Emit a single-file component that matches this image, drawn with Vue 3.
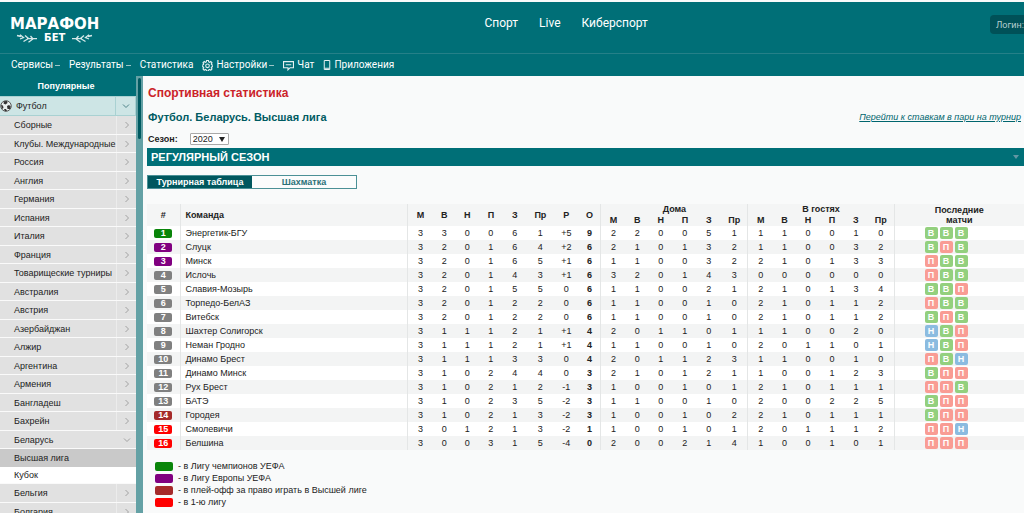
<script setup>
import { ref } from 'vue'

const sections = ['Спорт', 'Live', 'Киберспорт']
const before = ['Сборные', 'Клубы. Международные', 'Россия', 'Англия', 'Германия', 'Испания', 'Италия', 'Франция', 'Товарищеские турниры', 'Австралия', 'Австрия', 'Азербайджан', 'Алжир', 'Аргентина', 'Армения', 'Бангладеш', 'Бахрейн', 'Беларусь']
const after = ['Бельгия', 'Болгария']
const menu = [
  ...before.map((name) => ({ name, kind: name === 'Беларусь' ? 'open' : 'closed' })),
  { name: 'Высшая лига', kind: 'current' },
  { name: 'Кубок', kind: 'leaf' },
  ...after.map((name) => ({ name, kind: 'closed' })),
]
const season = ref('2020')

const source = [
  ['Энергетик-БГУ', '3 3 0 0 6 1 +5 9 2 2 0 0 5 1 1 1 0 0 1 0', 'ВВВ', 'green'],
  ['Слуцк', '3 2 0 1 6 4 +2 6 2 1 0 1 3 2 1 1 0 0 3 2', 'ВПВ', 'purple'],
  ['Минск', '3 2 0 1 6 5 +1 6 1 1 0 0 3 2 2 1 0 1 3 3', 'ПВВ', 'purple'],
  ['Ислочь', '3 2 0 1 4 3 +1 6 3 2 0 1 4 3 0 0 0 0 0 0', 'ПВВ', 'gray'],
  ['Славия-Мозырь', '3 2 0 1 5 5 0 6 1 1 0 0 2 1 2 1 0 1 3 4', 'ВВП', 'gray'],
  ['Торпедо-БелАЗ', '3 2 0 1 2 2 0 6 1 1 0 0 1 0 2 1 0 1 1 2', 'ПВВ', 'gray'],
  ['Витебск', '3 2 0 1 2 2 0 6 1 1 0 0 1 0 2 1 0 1 1 2', 'ВПВ', 'gray'],
  ['Шахтер Солигорск', '3 1 1 1 2 1 +1 4 2 0 1 1 0 1 1 1 0 0 2 0', 'НВП', 'gray'],
  ['Неман Гродно', '3 1 1 1 2 1 +1 4 1 1 0 0 1 0 2 0 1 1 0 1', 'НВП', 'gray'],
  ['Динамо Брест', '3 1 1 1 3 3 0 4 2 0 1 1 2 3 1 1 0 0 1 0', 'ПВН', 'gray'],
  ['Динамо Минск', '3 1 0 2 4 4 0 3 2 1 0 1 2 1 1 0 0 1 2 3', 'ВПП', 'gray'],
  ['Рух Брест', '3 1 0 2 1 2 -1 3 1 0 0 1 0 1 2 1 0 1 1 1', 'ППВ', 'gray'],
  ['БАТЭ', '3 1 0 2 3 5 -2 3 1 1 0 0 1 0 2 0 0 2 2 5', 'ВПП', 'gray'],
  ['Городея', '3 1 0 2 1 3 -2 3 1 0 0 1 0 2 2 1 0 1 1 1', 'ВПП', 'brown'],
  ['Смолевичи', '3 0 1 2 1 3 -2 1 1 0 0 1 0 1 2 0 1 1 1 2', 'ППН', 'red'],
  ['Белшина', '3 0 0 3 1 5 -4 0 2 0 0 2 1 4 1 0 0 1 0 1', 'ППП', 'red'],
]
const rows = source.map(([team, stats, form, zone]) => ({ team, stats: stats.split(' '), form: form.split(''), zone }))
const formClass = { В: 'win', П: 'loss', Н: 'draw' }
const total = ['М', 'В', 'Н', 'П', 'З', 'Пр', 'Р', 'О']
const half = ['М', 'В', 'Н', 'П', 'З', 'Пр']
const legend = [
  ['green', 'в Лигу чемпионов УЕФА'],
  ['purple', 'в Лигу Европы УЕФА'],
  ['brown', 'в плей-офф за право играть в Высшей лиге'],
  ['red', 'в 1-ю лигу'],
]
const branch = 'M1 1.500 5 2.500M4 .8 7.500 3.500 4 5M9 1.500 12.500 4.500 7.500 7.500M14.500 2 17 5 12.500 8.300M11 4.600H21'
const edge = (i) => i === 0 || i === 8 || i === 14
</script>

<template>
  <div class="page">
    <header class="top">
      <div class="brand-row">
        <a class="logo" href="#">
          <span class="logo-main">МАРАФОН</span>
          <span class="logo-sub">
            <svg class="laurel" viewBox="0 0 22 9"><path :d="branch" /></svg>
            <span>БЕТ</span>
            <svg class="laurel" viewBox="0 0 22 9"><path :d="branch" transform="matrix(-1 0 0 1 22 0)" /></svg>
          </span>
        </a>
        <nav class="sections"><a v-for="s in sections" :key="s" href="#">{{ s }}</a></nav>
        <button class="login" type="button">Логин:</button>
      </div>
      <nav class="tools">
        <a href="#">Сервисы<i class="caret"></i></a>
        <a href="#">Результаты<i class="caret"></i></a>
        <a href="#">Статистика</a>
        <a href="#">
          <svg class="icon gear" viewBox="0 0 20 20"><path d="M8.300 1h3.400l.5 2.500 1.700.7L16 2.800 18.200 5l-1.400 2.200.6 1.500L20 9v3l-2.500.5-.7 1.700 1.400 2.100-2.200 2.200-2.100-1.400-1.700.7-.5 2.200H8.300l-.5-2.200-1.700-.7L4 18.500l-2.200-2.200 1.400-2.100-.7-1.700L0 12V9l2.500-.5.700-1.500L1.800 5 4 2.800l2.100 1.400 1.700-.7z" /><circle cx="10" cy="10.500" r="3.300" /></svg>
          Настройки<i class="caret"></i>
        </a>
        <a href="#">
          <svg class="icon" viewBox="0 0 20 20"><path d="M1 3h18v11h-6L9 18v-4H1zM5 8.500h10" /></svg>
          Чат
        </a>
        <a href="#">
          <svg class="icon phone" viewBox="0 0 14 20"><path d="M1.500 1h11v18h-11zM2 16.500h10" /></svg>
          Приложения
        </a>
      </nav>
    </header>

    <div class="body">
      <aside class="side">
        <h3>Популярные</h3>
        <a class="sport" href="#">
          <svg class="ball" viewBox="0 0 24 24"><circle cx="12" cy="12" r="10.500" fill="#e9efef" stroke="#555" stroke-width="2" /><path fill="#333" d="M8 2.500 14 2l1 4-4 3-4-2zM2 10l4 1 1 5-3 2zM14 12l4-2 3.500 3-1.500 5-5 0zM8 18l4 0 2 4-4 .5z" /></svg>
          <span class="label">Футбол</span>
          <span class="toggle"><svg class="chev" viewBox="0 0 8 8"><path d="M1 2.500 4 5.500 7 2.500" /></svg></span>
        </a>
        <ul>
          <li v-for="m in menu" :key="m.name" :class="m.kind">
            <a href="#">
              <span class="label">{{ m.name }}</span>
              <span v-if="m.kind === 'closed' || m.kind === 'open'" class="toggle">
                <svg class="chev" viewBox="0 0 8 8"><path :d="m.kind === 'open' ? 'M1 2.500 4 5.500 7 2.500' : 'M2.500 1 5.500 4 2.500 7'" /></svg>
              </span>
            </a>
          </li>
        </ul>
      </aside>
      <div class="track"><div class="thumb"></div></div>

      <main class="content">
        <h1>Спортивная статистика</h1>
        <div class="heading">
          <h2>Футбол. Беларусь. Высшая лига</h2>
          <a href="#">Перейти к ставкам в пари на турнир</a>
        </div>
        <div class="season">
          <label for="season">Сезон:</label>
          <span class="select">
            <select id="season" v-model="season"><option>2020</option></select>
            <i class="arrow"></i>
          </span>
        </div>
        <div class="bar"><h2>РЕГУЛЯРНЫЙ СЕЗОН</h2><i class="arrow"></i></div>
        <div class="tabs">
          <button type="button" class="active">Турнирная таблица</button>
          <button type="button">Шахматка</button>
        </div>

        <table>
          <colgroup>
            <col class="c-rank"><col>
            <col class="w25"><col class="w23"><col class="w23"><col class="w24"><col class="w24"><col class="w27"><col class="w25"><col class="w22">
            <col class="w25"><col class="w23"><col class="w24"><col class="w24"><col class="w24"><col class="w27">
            <col class="w25"><col class="w23"><col class="w24"><col class="w24"><col class="w24"><col class="w26">
            <col class="c-form">
          </colgroup>
          <thead>
            <tr>
              <th rowspan="2">#</th>
              <th rowspan="2" class="team edge">Команда</th>
              <th v-for="(t, i) in total" :key="t" rowspan="2" :class="{ edge: edge(i) }">{{ t }}</th>
              <th colspan="6" class="edge">Дома</th>
              <th colspan="6" class="edge">В гостях</th>
              <th rowspan="2" class="edge last">Последние<br>матчи</th>
            </tr>
            <tr>
              <th v-for="(t, i) in half" :key="'h' + t" :class="{ edge: i === 0 }">{{ t }}</th>
              <th v-for="(t, i) in half" :key="'a' + t" :class="{ edge: i === 0 }">{{ t }}</th>
            </tr>
          </thead>
          <tbody>
            <tr v-for="(r, n) in rows" :key="r.team">
              <td><span class="rank" :class="r.zone">{{ n + 1 }}</span></td>
              <td class="team edge">{{ r.team }}</td>
              <td v-for="(v, i) in r.stats" :key="i" :class="{ edge: edge(i), points: i === 7 }">{{ v }}</td>
              <td class="edge">
                <div class="form"><span v-for="(f, i) in r.form" :key="i" :class="formClass[f]">{{ f }}</span></div>
              </td>
            </tr>
          </tbody>
        </table>

        <ul class="legend">
          <li v-for="[zone, text] in legend" :key="zone"><span class="rank" :class="zone"></span>- {{ text }}</li>
        </ul>
      </main>
    </div>
  </div>
</template>

<style>
html, body { margin: 0; overflow: hidden; }
</style>

<style scoped>
* { box-sizing: border-box; }
.page { height: 100vh; display: flex; flex-direction: column; overflow: hidden; background: #f9fafa; color: #222; font: 9px/14px "Liberation Sans", Arial, sans-serif; }
h1, h2, h3, ul { margin: 0; padding: 0; }
ul { list-style: none; }
a { color: inherit; text-decoration: none; }
button, select { font: inherit; margin: 0; }

.top { flex: none; margin-top: 2px; background: #006f77; color: #fff; font-family: Roboto, "Liberation Sans", sans-serif; }
.brand-row { display: flex; align-items: flex-start; height: 52px; border-bottom: 1px solid #258088; }
.logo { display: flex; flex-direction: column; align-items: center; padding: 15px 0 0 10px; font-family: "DejaVu Sans", sans-serif; font-weight: bold; }
.logo-main { font-size: 15px; line-height: 15px; }
.logo-sub { display: flex; align-items: center; gap: 6px; font-size: 10px; line-height: 12px; }
.laurel { width: 22px; height: 9px; fill: none; stroke: #d5e8e9; stroke-width: 1.3; }
.sections { display: flex; gap: 21px; margin: 0 auto; padding: 12px 0 0 43px; font-size: 12px; line-height: 18px; }
.login { width: 34px; height: 19px; margin-top: 13px; padding: 0 0 0 6px; border: 0; border-radius: 4px 0 0 4px; background: #005158; color: #b5cfd1; font-size: 9px; text-align: left; white-space: nowrap; }
.tools { display: flex; gap: 9px; height: 22px; padding-left: 11px; font-size: 10px; line-height: 22px; }
.tools a { display: flex; align-items: center; white-space: nowrap; }
.caret { width: 5px; height: 1px; margin-left: 2px; background: #9cc6c9; }
.icon { width: 11px; height: 11px; margin-right: 3px; fill: none; stroke: #e5f0f1; stroke-width: 2; }
.phone { width: 8px; height: 10px; }

.body { flex: 1; min-height: 0; display: flex; overflow: hidden; }
.side { flex: none; width: 136px; background: #e1e1e1; }
.side h3 { height: 20px; background: #006f77; color: #fff; font-size: 9px; line-height: 20px; text-align: center; padding-right: 4px; }
.side a { display: flex; align-items: center; height: 100%; }
.side .sport { height: 20px; background: #cde5e5; border: 1px solid #a9d1d2; border-left: 0; }
.ball { width: 12px; height: 12px; margin-right: 4px; }
.label { flex: 1; white-space: nowrap; }
.toggle { width: 20px; height: 100%; display: flex; align-items: center; justify-content: center; border-left: 1px solid #ececec; }
.sport .toggle { border-color: #a9d1d2; }
.chev { width: 8px; height: 8px; fill: none; stroke: #a2a2a2; stroke-width: 1; }
.sport .chev { stroke: #4d8388; }
.side li { height: 18px; padding-left: 14px; border-bottom: 1px solid #fafafa; }
.side li:nth-child(odd) { height: 19px; }
.side li.current { height: 18px; background: #c9c9c9; border: 0; }
.side li.leaf { height: 17px; background: #fff; }
.side li.open .toggle { border-color: transparent; }
.track { flex: none; width: 7px; padding: 2px; background: #64a1a5; }
.thumb { height: 61px; border-radius: 2px; background: #005a61; }

.content { flex: 1; min-width: 0; padding: 9px 0 0 4px; }
h1 { color: #cb2229; font-size: 12px; line-height: 16px; }
.heading { display: flex; justify-content: space-between; align-items: center; margin-top: 9px; padding-right: 3px; }
.heading h2 { color: #005b62; font-size: 11px; line-height: 14px; }
h1, .heading, .season { padding-left: 1px; }
.heading a { color: #00656d; font-style: italic; text-decoration: underline; }
.season { display: flex; align-items: center; gap: 12px; height: 14px; margin-top: 8px; font-weight: bold; }
.select { position: relative; display: flex; font-weight: normal; }
select { width: 39px; height: 12px; padding: 0 2px; appearance: none; border: 1px solid #a9a9a9; border-radius: 1px; background: #fff; color: #222; line-height: 10px; }
.arrow { width: 0; height: 0; border: 3px solid transparent; border-top: 5px solid #222; border-bottom: 0; }
.select .arrow { position: absolute; right: 4px; top: 4px; pointer-events: none; }
.bar { display: flex; justify-content: space-between; align-items: center; height: 18px; margin-top: 2px; padding: 0 5px 0 4px; background: #006f77; color: #fff; }
.bar h2 { font-size: 11px; }
.bar .arrow { border-top: 4px solid #6297a4; }
.tabs { display: flex; width: 210px; height: 14px; margin-top: 9px; border: 1px solid #4b9096; }
.tabs button { flex: 1; padding: 0; border: 0; background: #fbfcfc; color: #2b7178; font-weight: bold; line-height: 12px; }
.tabs .active { background: #00575e; color: #fff; }

table { width: 100%; margin-top: 15px; table-layout: fixed; border-collapse: collapse; }
.c-rank { width: 33px; } .c-form { width: 130px; }
.w22 { width: 22px; } .w23 { width: 23px; } .w24 { width: 24px; } .w25 { width: 25px; } .w26 { width: 26px; } .w27 { width: 27px; }
th, td { height: 14px; padding: 0; text-align: center; line-height: 12px; white-space: nowrap; }
thead { background: #f4f5f5; }
th { height: 11px; line-height: 11px; }
.last { line-height: 10px; }
.team { padding-left: 5px; text-align: left; }
.edge { border-left: 1px solid #e4e6e6; }
tbody tr { background: #fff; }
tbody tr:nth-child(even) { background: #f3f4f4; }
.points { font-weight: bold; }
.rank { display: block; width: 18px; height: 9px; margin: 0 auto; border-radius: 2px; color: #fff; font-weight: bold; line-height: 9px; }
.green { background: #0a850a; } .purple { background: #800080; } .gray { background: #808080; } .brown { background: #a52a2a; } .red { background: #f00; }
.form { display: flex; gap: 2px; padding-left: 30px; }
.form span { width: 13px; height: 12px; border-radius: 2px; color: #fff; font-weight: bold; line-height: 12px; }
.win { background: #93d07e; } .loss { background: #f99c94; } .draw { background: #8bbbe0; }
.legend { margin-top: 10px; padding-left: 8px; }
.legend li { display: flex; align-items: center; gap: 5px; height: 12px; }
.legend .rank { margin: 0; }
</style>
